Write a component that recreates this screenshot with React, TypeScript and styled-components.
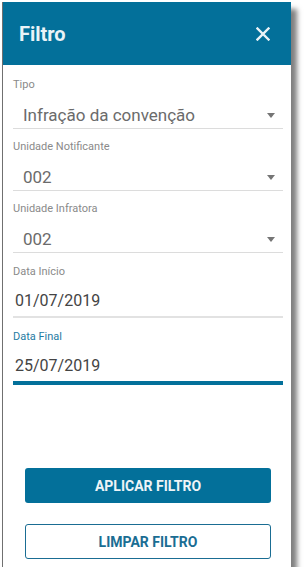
import React from 'react'
import styled, { createGlobalStyle } from 'styled-components'

const GlobalStyle = createGlobalStyle`
    body {
        margin: 0;
        background: #fff;
        font-family: Roboto, "Liberation Sans", sans-serif;
    }
`

const Painel = styled.div`
    margin: 2px 0 0 2px;
    width: 288px;
    height: 565px;
    background: #fff;
    border-left: 1px solid #707070;
    display: flex;
    flex-direction: column;
    box-shadow: 6px 7px 5px rgba(0, 0, 0, 0.5);
`

const Cabecalho = styled.header`
    height: 63px;
    background: #03709a;
    display: flex;
    align-items: center;
    justify-content: space-between;
    padding: 0 20px 0 16px;
    flex-shrink: 0;
`

const Titulo = styled.h2`
    margin: 0;
    color: #eaf3f7;
    font-size: 20px;
    font-weight: 700;
    padding-top: 1px;
`

const BotaoFechar = styled.button`
    border: 0;
    background: none;
    padding: 0;
    width: 16px;
    height: 16px;
    display: flex;
    align-items: center;
    justify-content: center;
    cursor: pointer;
`

const Corpo = styled.div`
    flex: 1;
    padding: 2px 8px 0 10px;
    display: flex;
    flex-direction: column;
`

const Campo = styled.div<{ $data?: boolean }>`
    padding-top: ${p => (p.$data ? 12 : 11)}px;
    display: flex;
    flex-direction: column;
`

const Rotulo = styled.label<{ $ativo?: boolean }>`
    font-size: 11px;
    line-height: 14px;
    color: ${p => (p.$ativo ? '#1f7ba3' : '#8a8a8a')};
`

const LinhaValor = styled.div<{ $data?: boolean; $ativo?: boolean }>`
    margin-top: ${p => (p.$data ? 12 : 13)}px;
    padding: 0 8px 0 ${p => (p.$data ? 2 : 10)}px;
    height: 20px;
    display: flex;
    align-items: center;
    justify-content: space-between;
    padding-bottom: ${p => (p.$data ? 5 : 3)}px;
    box-sizing: content-box;
    border-bottom: ${p => (p.$ativo ? '4px solid #03709a' : p.$data ? '2px solid #e2e2e2' : '1px solid #dcdcdc')};
`

const Valor = styled.span<{ $data?: boolean }>`
    font-size: ${p => (p.$data ? 16 : 17)}px;
    line-height: 20px;
    color: ${p => (p.$data ? '#444' : '#6b6b6b')};
`

const Seta = styled.span`
    width: 0;
    height: 0;
    border-left: 4.5px solid transparent;
    border-right: 4.5px solid transparent;
    border-top: 5px solid #757575;
`

const Rodape = styled.div`
    padding: 0 20px 8px 22px;
    display: flex;
    flex-direction: column;
    gap: 21px;
`

const Botao = styled.button<{ $contorno?: boolean }>`
    height: 35px;
    border-radius: 3px;
    font-family: Roboto, "Liberation Sans", sans-serif;
    font-size: 14px;
    font-weight: 700;
    cursor: pointer;
    background: ${p => (p.$contorno ? '#fff' : '#03709a')};
    color: ${p => (p.$contorno ? '#1a6d93' : '#eef4f7')};
    border: ${p => (p.$contorno ? '1.5px solid #1a6d93' : '0')};
`

const selects = [
  { rotulo: 'Tipo', valor: 'Infração da convenção' },
  { rotulo: 'Unidade Notificante', valor: '002' },
  { rotulo: 'Unidade Infratora', valor: '002' },
]

const datas = [
  { rotulo: 'Data Início', valor: '01/07/2019', ativo: false },
  { rotulo: 'Data Final', valor: '25/07/2019', ativo: true },
]

export default function App() {
  return (
    <>
      <GlobalStyle />
      <Painel>
        <Cabecalho>
          <Titulo>Filtro</Titulo>
          <BotaoFechar aria-label="Fechar">
            <svg width="14" height="14" viewBox="0 0 14 14">
              <path d="M1.5 1.5 L12.5 12.5 M12.5 1.5 L1.5 12.5" stroke="#eaf3f7" strokeWidth="2.4" strokeLinecap="square" />
            </svg>
          </BotaoFechar>
        </Cabecalho>
        <Corpo>
          {selects.map(s => (
            <Campo key={s.rotulo}>
              <Rotulo>{s.rotulo}</Rotulo>
              <LinhaValor>
                <Valor>{s.valor}</Valor>
                <Seta />
              </LinhaValor>
            </Campo>
          ))}
          {datas.map(d => (
            <Campo key={d.rotulo} $data>
              <Rotulo $ativo={d.ativo}>{d.rotulo}</Rotulo>
              <LinhaValor $data $ativo={d.ativo}>
                <Valor $data>{d.valor}</Valor>
              </LinhaValor>
            </Campo>
          ))}
        </Corpo>
        <Rodape>
          <Botao>APLICAR FILTRO</Botao>
          <Botao $contorno>LIMPAR FILTRO</Botao>
        </Rodape>
      </Painel>
    </>
  )
}
